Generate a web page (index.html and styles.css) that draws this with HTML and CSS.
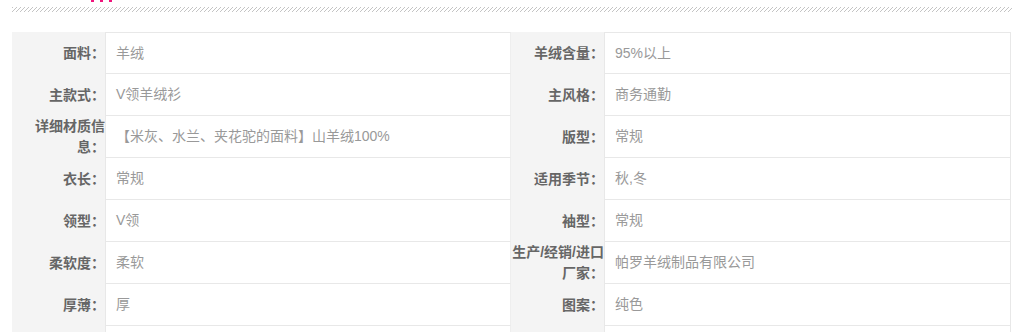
FILE: index.html
```html
<!DOCTYPE html>
<html lang="zh-CN">
<head>
<meta charset="utf-8">
<title>规格参数</title>
<link rel="stylesheet" href="styles.css">
</head>
<body>
<div class="page">
  <div class="heading-tail"><span></span><span></span><span></span></div>
  <div class="hatch"></div>
  <ul class="params">
    <li class="item"><div class="label">面料：</div><div class="value">羊绒</div></li>
    <li class="item"><div class="label">羊绒含量：</div><div class="value">95%以上</div></li>
    <li class="item"><div class="label">主款式：</div><div class="value">V领羊绒衫</div></li>
    <li class="item"><div class="label">主风格：</div><div class="value">商务通勤</div></li>
    <li class="item"><div class="label">详细材质信息：</div><div class="value">【米灰、水兰、夹花驼的面料】山羊绒100%</div></li>
    <li class="item"><div class="label">版型：</div><div class="value">常规</div></li>
    <li class="item"><div class="label">衣长：</div><div class="value">常规</div></li>
    <li class="item"><div class="label">适用季节：</div><div class="value">秋,冬</div></li>
    <li class="item"><div class="label">领型：</div><div class="value">V领</div></li>
    <li class="item"><div class="label">袖型：</div><div class="value">常规</div></li>
    <li class="item"><div class="label">柔软度：</div><div class="value">柔软</div></li>
    <li class="item"><div class="label">生产/经销/进口厂家：</div><div class="value">帕罗羊绒制品有限公司</div></li>
    <li class="item"><div class="label">厚薄：</div><div class="value">厚</div></li>
    <li class="item"><div class="label">图案：</div><div class="value">纯色</div></li>
    <li class="item"><div class="label">&nbsp;</div><div class="value">&nbsp;</div></li>
    <li class="item"><div class="label">&nbsp;</div><div class="value">&nbsp;</div></li>
  </ul>
</div>
</body>
</html>
```

FILE: styles.css
```css
* { box-sizing: border-box; }
html, body { margin: 0; padding: 0; background: #fff; }
body {
  font-family: "Liberation Sans", "Noto Sans CJK SC", sans-serif;
  font-size: 14px;
  overflow: hidden;
}
.page {
  width: 1000px;
  margin-left: 12px;
  padding-top: 7px;
  position: relative;
}
.heading-tail {
  position: absolute;
  left: 79px;
  top: 0;
  display: flex;
  gap: 6px;
}
.heading-tail span {
  display: block;
  width: 3px;
  height: 2px;
  background: #f0147c;
}
.hatch {
  height: 5px;
  background: repeating-linear-gradient(135deg, #c4c4c4 0 1px, transparent 1px 2.83px);
}
.params {
  list-style: none;
  margin: 20px 0 0;
  padding: 0;
  display: grid;
  grid-template-columns: 499px 500px;
}
.item {
  display: flex;
  min-height: 42px;
}
.label {
  flex: 0 0 93px;
  background: #f4f4f4;
  color: #666;
  font-weight: bold;
  text-align: right;
  padding-left: 0;
  line-height: 21px;
  display: flex;
  align-items: center;
  justify-content: flex-end;
}
.value {
  flex: 1;
  color: #999;
  padding-left: 10px;
  line-height: 21px;
  display: flex;
  align-items: center;
  border-left: 1px solid #e8e8e8;
  border-right: 1px solid #e8e8e8;
  border-bottom: 1px solid #e8e8e8;
}
.item:nth-child(-n+2) .value { border-top: 1px solid #e8e8e8; }
.item:nth-child(odd) .value { border-right-color: #eee; }
```
